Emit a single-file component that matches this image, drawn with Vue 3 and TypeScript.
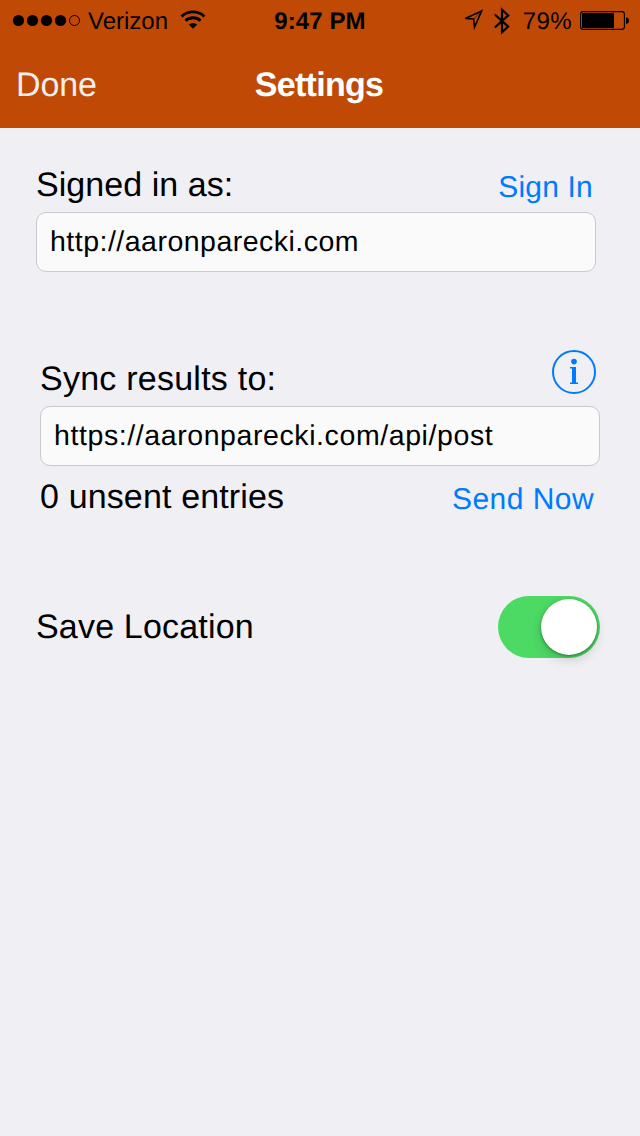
<script setup lang="ts">
import { ref } from 'vue'

const signalDots = [true, true, true, true, false]
const account = ref('http://aaronparecki.com')
const endpoint = ref('https://aaronparecki.com/api/post')
const unsent = ref(0)
const saveLocation = ref(true)
</script>

<template>
  <div class="screen">
    <header class="top">
      <div class="status">
        <div class="carrier">
          <svg class="dots" width="70" height="14" viewBox="0 0 70 14">
            <circle
              v-for="(on, i) in signalDots"
              :key="i"
              :cx="6.5 + i * 14"
              cy="7.5"
              :r="on ? 5.6 : 5"
              :fill="on ? '#000' : 'none'"
              :stroke="on ? 'none' : '#000'"
              stroke-width="1"
            />
          </svg>
          <span class="carrier-name">Verizon</span>
          <svg class="wifi" width="26" height="20" viewBox="0 0 26 20">
            <g fill="none" stroke="#000" stroke-width="2.8">
              <path d="M1.6 6.5a16.6 16.6 0 0 1 22.8 0" />
              <path d="M5.5 10.7a11 11 0 0 1 15 0" />
            </g>
            <path d="M8.8 14.6a6.2 6.2 0 0 1 8.4 0L13 18.8z" fill="#000" />
          </svg>
        </div>
        <span class="time">9:47 PM</span>
        <div class="indicators">
          <svg class="arrow" width="22" height="22" viewBox="0 0 22 22">
            <path d="M19.6 2 3.4 9.4l8.2.6.9 8.2z" fill="none" stroke="#000" stroke-width="1.6" />
            <path d="M19.6 2 11.6 10" stroke="#000" stroke-width=".6" />
          </svg>
          <svg class="bluetooth" width="18" height="28" viewBox="0 0 18 28">
            <path d="M1.8 7.5 15.2 19.6 9 25.2V2.8l6.2 5.6L1.8 20.5" fill="none" stroke="#000" stroke-width="2.2" />
          </svg>
          <span class="percent">79%</span>
          <svg class="battery" width="50" height="20" viewBox="0 0 50 20">
            <rect x=".6" y="1.6" width="43.8" height="17.8" rx="2.6" fill="none" stroke="#000" stroke-width="1.1" />
            <rect x="2" y="3" width="32" height="15" rx="1" fill="#000" />
            <path d="M46 7.3c4 .5 4 6.2 0 6.7z" fill="#000" />
          </svg>
        </div>
      </div>
      <nav class="nav">
        <span class="done">Done</span>
        <h1 class="title">Settings</h1>
      </nav>
    </header>

    <main>
      <section class="group account">
        <div class="row">
          <span class="label signed">Signed in as:</span>
          <span class="action sign-in">Sign In</span>
        </div>
        <div class="field">{{ account }}</div>
      </section>

      <section class="group sync">
        <div class="row">
          <span class="label results">Sync results to:</span>
          <svg class="info" width="44" height="44" viewBox="0 0 44 44">
            <circle cx="22" cy="22" r="21" fill="none" stroke="#007aff" stroke-width="2" />
            <circle cx="22" cy="11.6" r="2.8" fill="#007aff" />
            <path d="M18 17h6v15.6h2V34h-8v-1.4h2V18.4h-2z" fill="#007aff" />
          </svg>
        </div>
        <div class="field long">{{ endpoint }}</div>
        <div class="row below">
          <span class="label unsent">{{ unsent }} unsent entries</span>
          <span class="action send">Send Now</span>
        </div>
      </section>

      <section class="group location">
        <span class="label save">Save Location</span>
        <div class="toggle" :class="{ on: saveLocation }" @click="saveLocation = !saveLocation">
          <div class="thumb"></div>
        </div>
      </section>
    </main>
  </div>
</template>

<style>
body {
  margin: 0;
  background: #efeff4;
}
</style>

<style scoped>
.screen {
  width: 640px;
  height: 1136px;
  overflow: hidden;
  background: #efeff4;
  color: #000;
  font-family: "Liberation Sans", Arial, sans-serif;
  text-rendering: geometricPrecision;
  white-space: nowrap;
}
.top {
  height: 128px;
  background: #c04a05;
}
.status {
  height: 40px;
  display: grid;
  grid-template-columns: 1fr auto 1fr;
  font-size: 24px;
  line-height: 40px;
}
.carrier,
.indicators {
  display: flex;
  align-items: flex-start;
}
.dots {
  margin: 13px 0 0 12px;
}
.carrier-name {
  margin-left: 6px;
  margin-top: 2px;
}
.wifi {
  margin: 10px 0 0 12px;
}
.time {
  margin-top: 2px;
  font-weight: 700;
  letter-spacing: 0.1px;
}
.indicators {
  justify-content: flex-end;
}
.arrow {
  margin-top: 9px;
}
.bluetooth {
  margin: 7px 0 0 9px;
}
.percent {
  margin: 2px 0 0 12px;
  letter-spacing: 0.4px;
}
.battery {
  margin: 10px 10px 0 8px;
}
.nav {
  height: 88px;
  display: grid;
  grid-template-columns: 1fr auto 1fr;
  font-size: 34px;
  line-height: 40px;
  padding-top: 25px;
  box-sizing: border-box;
}
.done {
  padding-left: 16px;
  letter-spacing: -0.15px;
  color: #f3eeee;
}
.title {
  margin: 0;
  font-size: 34px;
  font-weight: 700;
  letter-spacing: -0.7px;
  color: #fff;
  transform: translateX(-1px);
}
.row {
  display: flex;
  justify-content: space-between;
  align-items: flex-start;
}
.label {
  font-size: 34px;
  line-height: 40px;
}
.action {
  font-size: 30px;
  line-height: 40px;
  color: #007aff;
}
.field {
  height: 60px;
  box-sizing: border-box;
  padding: 0 13px;
  border: 1px solid #c8c8cd;
  border-radius: 10px;
  background: #fafafa;
  font-size: 28.5px;
  line-height: 58px;
  letter-spacing: 0.49px;
}
.field.long {
  letter-spacing: 0.59px;
}
.account {
  margin: 37px 44px 0 36px;
}
.account .row {
  height: 47px;
}
.signed {
  letter-spacing: 0.05px;
}
.sign-in {
  margin: 3px 3px 0 0;
  letter-spacing: 0.2px;
}
.sync {
  margin: 78px 40px 0;
}
.sync .row {
  height: 56px;
}
.results {
  margin-top: 9px;
  letter-spacing: 0.24px;
}
.info {
  margin-right: 4px;
}
.sync .below {
  padding-top: 11px;
  height: 50px;
  box-sizing: border-box;
}
.unsent {
  letter-spacing: 0.14px;
}
.send {
  margin: 3px 6px 0 0;
  letter-spacing: 0.45px;
}
.location {
  display: flex;
  justify-content: space-between;
  align-items: center;
  margin: 80px 40px 0 36px;
  height: 62px;
}
.save {
  letter-spacing: 0.18px;
}
.toggle {
  width: 102px;
  height: 62px;
  box-sizing: border-box;
  padding: 3px;
  display: flex;
  border-radius: 31px;
  background: #dedee2;
}
.toggle.on {
  justify-content: flex-end;
  background: #4cd964;
}
.thumb {
  width: 56px;
  height: 56px;
  border-radius: 50%;
  background: #fff;
  box-shadow: 0 1px 3px rgba(0, 0, 0, 0.4), 0 5px 12px rgba(0, 0, 0, 0.15);
}
</style>
